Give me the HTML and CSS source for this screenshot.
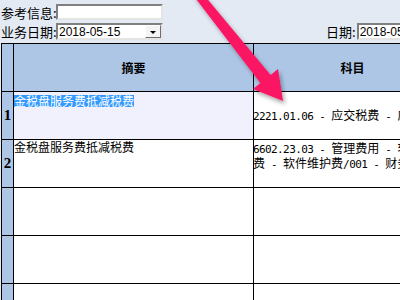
FILE: index.html
```html
<!DOCTYPE html>
<html>
<head>
<meta charset="utf-8">
<link rel="stylesheet" href="styles.css">
</head>
<body>
<div class="form">
  <div class="row r1">
    <span class="lbl">参考信息:</span>
    <div class="input ref"></div>
  </div>
  <div class="row r2">
    <span class="lbl">业务日期:</span>
    <div class="input sel"><span class="val">2018-05-15</span><span class="btn"><span class="tri"></span></span></div>
    <span class="lbl lbl-date">日期:</span>
    <div class="input date"><span class="val">2018-05-15</span></div>
  </div>
</div>
<div class="grid">
  <div class="num"></div>
  <div class="hd">摘要</div>
  <div class="hd">科目</div>

  <div class="num">1</div>
  <div class="c lav"><span class="hl">金税盘服务费抵减税费</span></div>
  <div class="c mid"><div class="t"><span class="a">2221.01.06 - </span>应交税费<span class="a"> - </span>应交增值税</div></div>

  <div class="num">2</div>
  <div class="c top"><div class="tx">金税盘服务费抵减税费</div></div>
  <div class="c top2"><div class="t"><span class="a">6602.23.03 - </span>管理费用<span class="a"> - </span>软件维护<br>费<span class="a"> - </span>软件维护费<span class="a">/001 - </span>财务部</div></div>

  <div class="num"></div><div class="c"></div><div class="c"></div>
  <div class="num"></div><div class="c"></div><div class="c"></div>
  <div class="num"></div><div class="c"></div><div class="c"></div>
</div>
<svg class="arrow" width="400" height="300" viewBox="0 0 400 300">
  <defs>
    <filter id="sh" x="-20%" y="-20%" width="140%" height="140%">
      <feDropShadow dx="2" dy="3" stdDeviation="2" flood-color="#000" flood-opacity="0.35"/>
    </filter>
  </defs>
  <polygon points="193,-5 204,-5 270.6,75 278,69 283,101 253,89 260.4,83" fill="#fb1463" filter="url(#sh)"/>
</svg>
</body>
</html>
```
FILE: styles.css
```css
html, body {
  margin: 0;
  padding: 0;
  overflow: hidden;
  width: 400px;
  height: 300px;
}
body {
  background: #e3eaf4;
  font-family: "Noto Sans CJK SC", sans-serif;
  position: relative;
}
.form {
  padding-top: 4px;
  display: flex;
  flex-direction: column;
  gap: 3px;
}
.row {
  display: flex;
  align-items: center;
  white-space: nowrap;
}
.r1 { height: 16px; }
.r2 { height: 17px; }
.lbl {
  width: 55px;
  padding-left: 1px;
  font-size: 13px;
  line-height: 17px;
  color: #000;
  flex-shrink: 0;
}
.input {
  box-sizing: border-box;
  background: #fff;
  border: 2px solid;
  border-color: #808080 #e4e4e4 #e4e4e4 #808080;
  flex-shrink: 0;
  display: flex;
  align-items: center;
}
.ref { width: 107px; height: 16px; }
.sel { width: 107px; height: 17px; }
.date { width: 100px; height: 17px; }
.val {
  font-family: "Liberation Sans", sans-serif;
  font-size: 12px;
  padding-left: 1px;
  color: #000;
}
.btn {
  margin-left: auto;
  width: 16px;
  height: 13px;
  box-sizing: border-box;
  background: #f4f4f4;
  border: 1px solid;
  border-color: #ffffff #6e6e6e #6e6e6e #ffffff;
  display: flex;
  align-items: center;
  justify-content: center;
}
.tri {
  width: 0;
  height: 0;
  border-left: 3px solid transparent;
  border-right: 3px solid transparent;
  border-top: 3px solid #000;
  margin-top: 2px;
}
.lbl-date {
  width: auto;
  margin-left: 163px;
  padding-left: 0;
  padding-right: 1px;
}
.grid {
  display: grid;
  grid-template-columns: 11px 239px 197px;
  grid-auto-rows: 47px;
  gap: 1px;
  padding: 1px;
  background: #000;
  width: max-content;
  margin-top: 3px;
  margin-left: 1px;
}
.num {
  background: #adc6e5;
  font-family: "Liberation Serif", serif;
  font-weight: bold;
  font-size: 15px;
  display: flex;
  align-items: center;
  justify-content: center;
  color: #000;
}
.hd {
  background: #adc6e5;
  font-weight: bold;
  font-size: 12px;
  display: flex;
  align-items: center;
  justify-content: center;
  color: #000;
}
.c {
  background: #fff;
  font-size: 12px;
  color: #000;
  white-space: nowrap;
  overflow: hidden;
}
.lav { background: #f1f1fd; }
.hl {
  display: inline-block;
  background: #3399ff;
  color: #fff;
  line-height: 12px;
  height: 12px;
}
.mid {
  display: flex;
  align-items: center;
}
.top .tx {
  line-height: 13px;
}
.top2 {
  padding-top: 1px;
}
.t {
  margin-left: -1px;
  line-height: 13px;
}
.a {
  font-family: "DejaVu Sans Mono", monospace;
  font-size: 11px;
  letter-spacing: -0.6px;
  white-space: pre;
}
.arrow {
  position: absolute;
  left: 0;
  top: 0;
  pointer-events: none;
}
```
